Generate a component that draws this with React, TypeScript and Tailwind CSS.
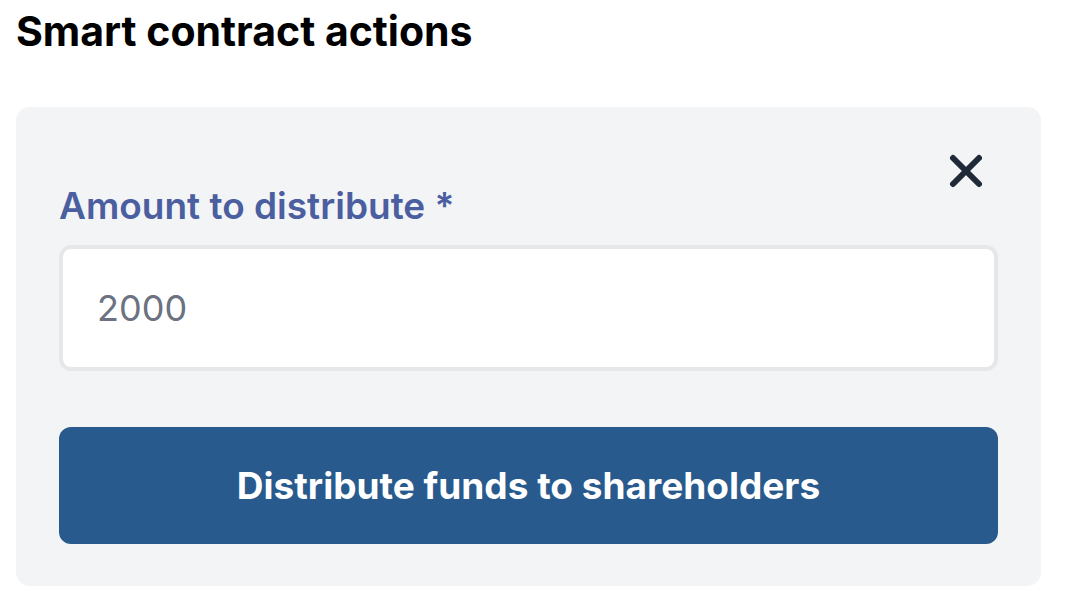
import { X } from "lucide-react";

export default function App() {
    return (
        <div className="min-h-screen bg-white px-[16px] pt-[7px]" style={{ fontFamily: "Inter, 'Noto Sans', sans-serif" }}>
            <h1 className="text-[41px] leading-[48px] font-bold text-black">Smart contract actions</h1>

            <div className="relative mt-[52px] w-[1025px] rounded-[14px] bg-[#f3f4f6] px-[43px] pt-[77px] pb-[42px]">
                <button className="absolute top-[38px] right-[49px] text-[#1f2937]">
                    <X size={52} strokeWidth={2.75} />
                </button>

                <label className="block text-[37px] leading-[44px] font-semibold text-[#4a5ea0]">
                    Amount to distribute *
                </label>

                <input
                    type="text"
                    defaultValue="2000"
                    className="mt-[17px] block h-[126px] w-full rounded-[12px] border-[4px] border-[#e5e7eb] bg-white px-[34px] text-[36px] text-[#6b7280] outline-none"
                />

                <button className="mt-[56px] flex h-[117px] w-full items-center justify-center rounded-[12px] bg-[#285a8e] text-[37px] font-bold text-white">
                    Distribute funds to shareholders
                </button>
            </div>
        </div>
    );
}
